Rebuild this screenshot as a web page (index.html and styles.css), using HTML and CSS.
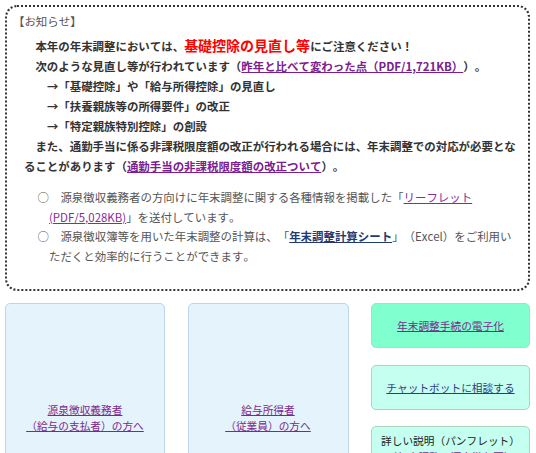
FILE: index.html
```html
<!DOCTYPE html>
<html lang="ja">
<head>
<meta charset="utf-8">
<title>年末調整</title>
<link rel="stylesheet" href="styles.css">
</head>
<body>
<div class="page">
  <section class="notice">
    <div class="notice-title">【お知らせ】</div>
    <div class="notice-main">
      <p class="para">本年の年末調整においては、<span class="alert">基礎控除の見直し等</span>にご注意ください！</p>
      <p class="para">次のような見直し等が行われています（<a class="link-purple" href="#">昨年と比べて変わった点（PDF/1,721KB）</a>）。</p>
      <p class="arrow">→「基礎控除」や「給与所得控除」の見直し</p>
      <p class="arrow">→「扶養親族等の所得要件」の改正</p>
      <p class="arrow">→「特定親族特別控除」の創設</p>
      <p class="para">また、通勤手当に係る非課税限度額の改正が行われる場合には、年末調整での対応が必要となることがあります（<a class="link-purple" href="#">通勤手当の非課税限度額の改正ついて</a>）。</p>
    </div>
    <div class="notice-sub">
      <p class="item">○　源泉徴収義務者の方向けに年末調整に関する各種情報を掲載した「<a class="link-plain" href="#">リーフレット(PDF/5,028KB)</a>」を送付しています。</p>
      <p class="item">○　源泉徴収簿等を用いた年末調整の計算は、「<a class="link-navy" href="#">年末調整計算シート</a>」（Excel）をご利用いただくと効率的に行うことができます。</p>
    </div>
  </section>

  <div class="nav">
    <div class="card"><a class="card-link" href="#">源泉徴収義務者<br>（給与の支払者）の方へ</a></div>
    <div class="card"><a class="card-link" href="#">給与所得者<br>（従業員）の方へ</a></div>
    <div class="side">
      <div class="btn btn-green"><a class="btn-link" href="#">年末調整手続の電子化</a></div>
      <div class="btn btn-mint"><a class="btn-link navy" href="#">チャットボットに相談する</a></div>
      <div class="btn btn-mint btn-tall">
        <span class="btn-text">詳しい説明（パンフレット）</span>
        <a class="btn-link" href="#">（年末調整・源泉徴収票）</a>
      </div>
    </div>
  </div>
</div>
</body>
</html>
```
FILE: styles.css
```css
html, body {
  margin: 0;
  padding: 0;
  background: #ffffff;
}
body {
  font-family: "Noto Sans CJK JP", "Noto Sans", sans-serif;
  color: #333333;
  text-spacing-trim: space-all;
  font-kerning: none;
}
.page {
  padding: 5px 6px 0 5px;
}
.notice {
  border: 2px dotted #333333;
  border-radius: 12px;
  padding: 4px 10px 23px 17px;
  font-size: 11.45px;
  line-height: 20px;
}
.notice p {
  margin: 0;
}
.notice-title {
  margin-left: -11px;
  margin-bottom: 4px;
  color: #555555;
}
.notice-main {
  font-weight: bold;
  color: #333333;
}
.para {
  text-indent: 1em;
}
.arrow {
  padding-left: 2em;
}
.alert {
  color: #ff0000;
  font-size: 14px;
}
.link-purple {
  color: #7a2090;
  text-decoration: underline;
}
.notice-sub {
  margin-top: 12px;
  color: #555555;
  line-height: 19.5px;
}
.item {
  padding-left: 25px;
  text-indent: -1em;
}
.link-plain {
  color: #8a2a9a;
  text-decoration: underline;
}
.link-navy {
  color: #1f3b70;
  font-weight: bold;
  text-decoration: underline;
}
.nav {
  margin-top: 12px;
  display: grid;
  grid-template-columns: 160px 161px 159px;
  justify-content: space-between;
  align-items: start;
  font-size: 10.7px;
  line-height: 16px;
}
.card {
  box-sizing: border-box;
  height: 230px;
  background: #e5f3fd;
  border: 1px solid #bcd5ea;
  border-radius: 5px;
  display: flex;
  align-items: center;
  justify-content: center;
  text-align: center;
}
.card-link {
  color: #7a2a8c;
  text-decoration: underline;
}
.side {
  display: flex;
  flex-direction: column;
  gap: 16px;
}
.btn {
  box-sizing: border-box;
  height: 45px;
  border-radius: 5px;
  display: flex;
  flex-direction: column;
  align-items: center;
  justify-content: center;
  text-align: center;
}
.btn-green {
  background: #80ffcf;
  border: 1px solid #a8e69c;
}
.btn-mint {
  background: #c4fff0;
  border: 1px solid #a8d6bf;
}
.btn-green + .btn-mint {
  margin-top: 1px;
}
.btn-tall {
  height: 80px;
  justify-content: flex-start;
  padding-top: 6px;
}
.btn-text {
  color: #222222;
}
.btn-link {
  color: #7a2a8c;
  text-decoration: underline;
}
.btn-link.navy {
  color: #2c3d7c;
}
```
